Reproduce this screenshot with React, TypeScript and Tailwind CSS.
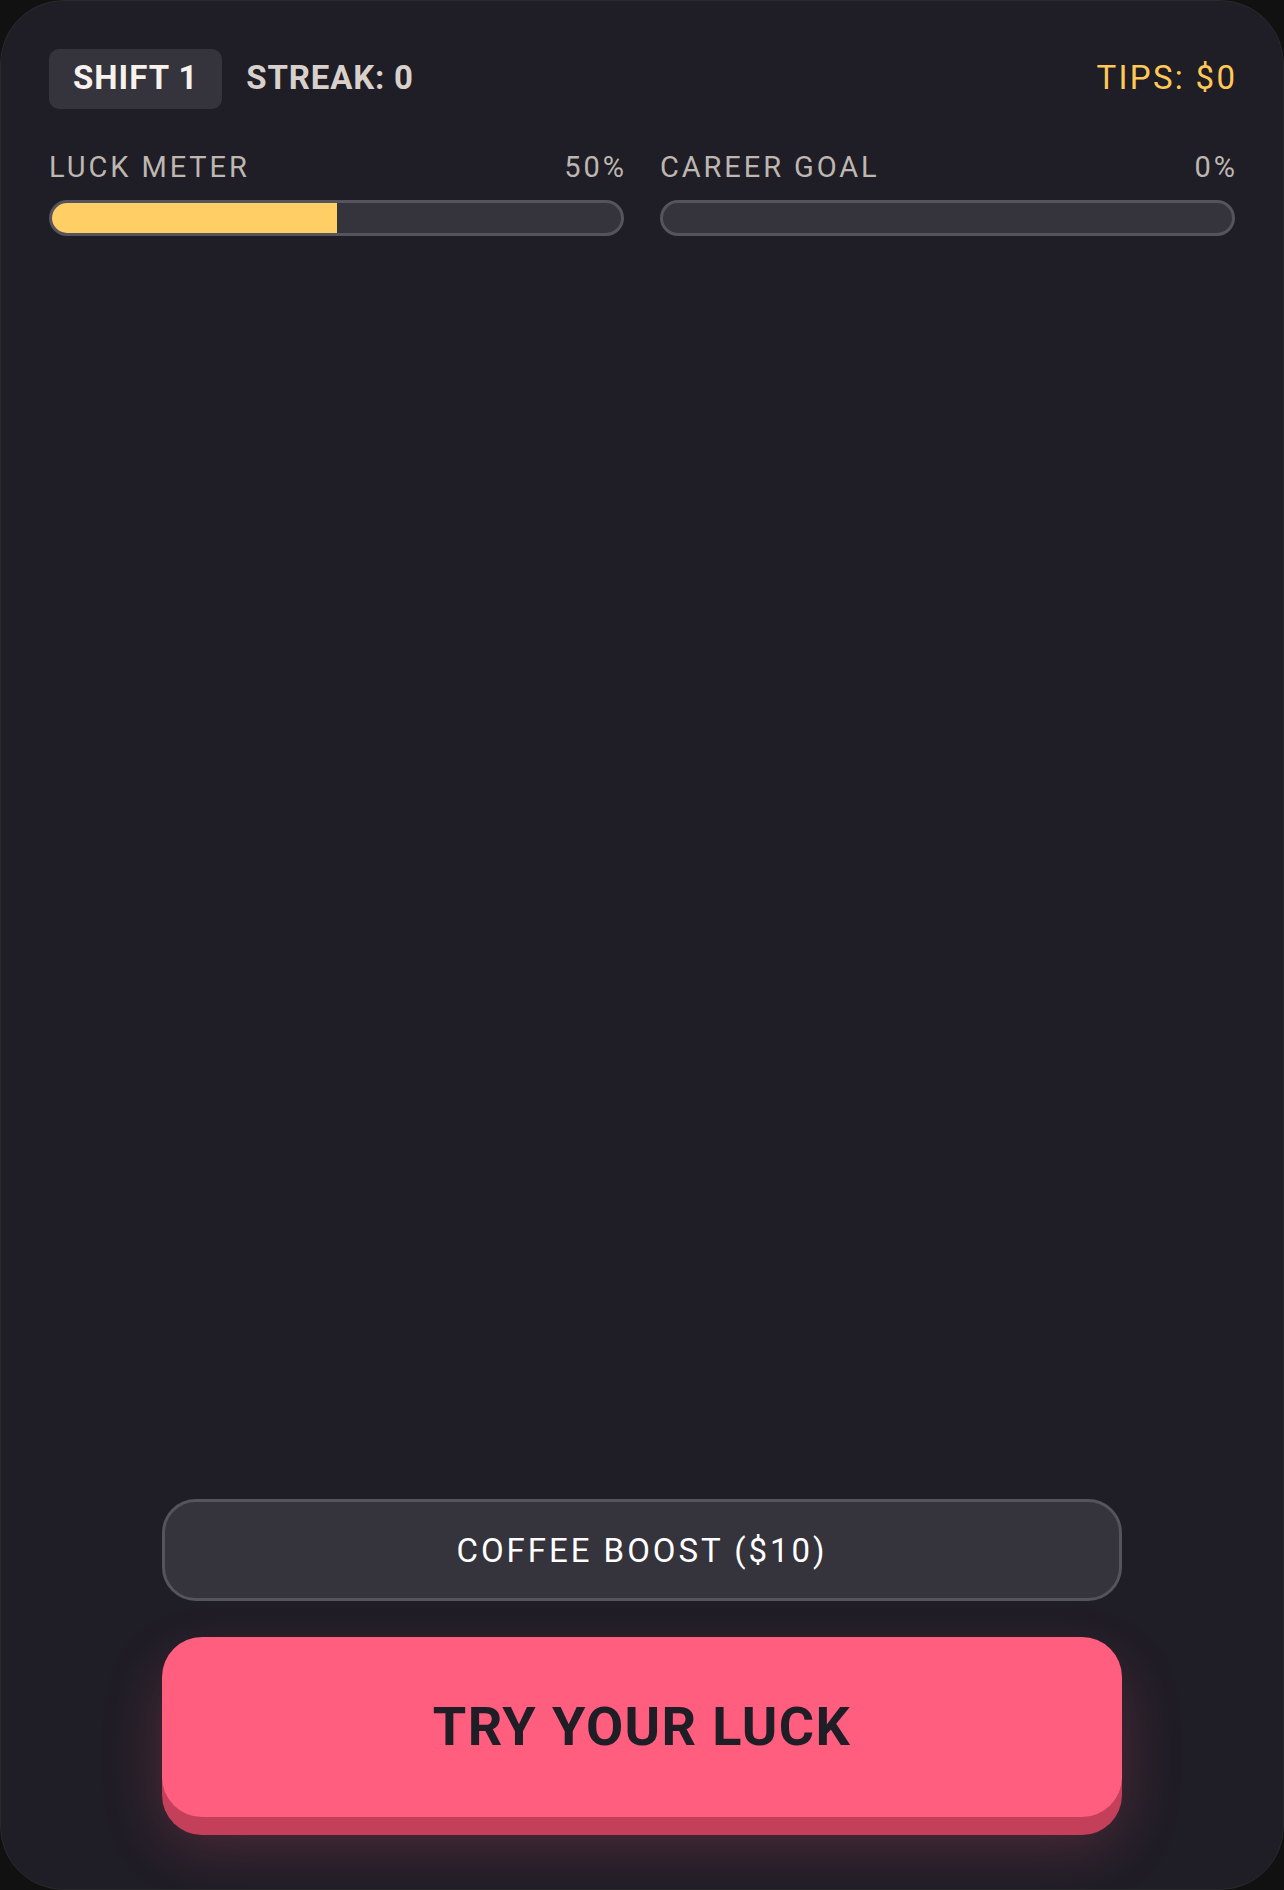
import React from "react";

const font = { fontFamily: 'Roboto, "Liberation Sans", sans-serif' };

function Meter({ label, value, pct }: { label: string; value: string; pct: number }) {
  return (
    <div className="flex flex-col">
      <div className="flex items-center justify-between text-[29px] leading-none tracking-[0.1em] text-[#bdb6b1]">
        <span>{label}</span>
        <span className="mr-[-0.1em]">{value}</span>
      </div>
      <div className="mt-[18px] h-[36px] overflow-hidden rounded-full border-[3px] border-[#55535b] bg-[#35333c]">
        <div className="h-full bg-[#ffcf66]" style={{ width: `${pct}%` }} />
      </div>
    </div>
  );
}

export default function App() {
  return (
    <div className="min-h-screen bg-[#111111]" style={font}>
      <div className="flex h-[1890px] flex-col rounded-[64px] border border-[#2a2a2c] bg-[#1f1d26] px-12 pt-12 pb-[54px]">
        <div className="flex h-[60px] items-center justify-between">
          <div className="flex items-center gap-6">
            <div className="flex h-[60px] items-center rounded-[10px] bg-[#35333c] px-6 pb-[4px] text-[33px] font-bold leading-none tracking-[0.03em] text-[#f7f2ec]">
              SHIFT 1
            </div>
            <div className="pb-[4px] text-[33px] font-bold leading-none tracking-[0.025em] text-[#d8d1cb]">STREAK: 0</div>
          </div>
          <div className="mr-[-0.07em] pb-[4px] text-[33px] leading-none tracking-[0.07em] text-[#ffc857]">TIPS: $0</div>
        </div>

        <div className="mt-[44px] grid grid-cols-2 gap-9">
          <Meter label="LUCK METER" value="50%" pct={50} />
          <Meter label="CAREER GOAL" value="0%" pct={0} />
        </div>

        <div className="flex-1" />

        <div className="flex flex-col items-center gap-9">
          <button className="flex h-[102px] w-[960px] items-center justify-center rounded-[34px] border-[3px] border-[#55535b] bg-[#35333c] text-[33px] leading-none tracking-[0.09em] text-white">
            COFFEE BOOST ($10)
          </button>
          <button className="mb-[18px] flex h-[180px] w-[960px] items-center justify-center rounded-[40px] bg-[#ff5e7e] text-[54px] font-bold leading-none tracking-[0.025em] text-[#1f1d26] shadow-[0_18px_0_#c4405a,0_28px_60px_rgba(255,94,126,0.22)]">
            TRY YOUR LUCK
          </button>
        </div>
      </div>
    </div>
  );
}
